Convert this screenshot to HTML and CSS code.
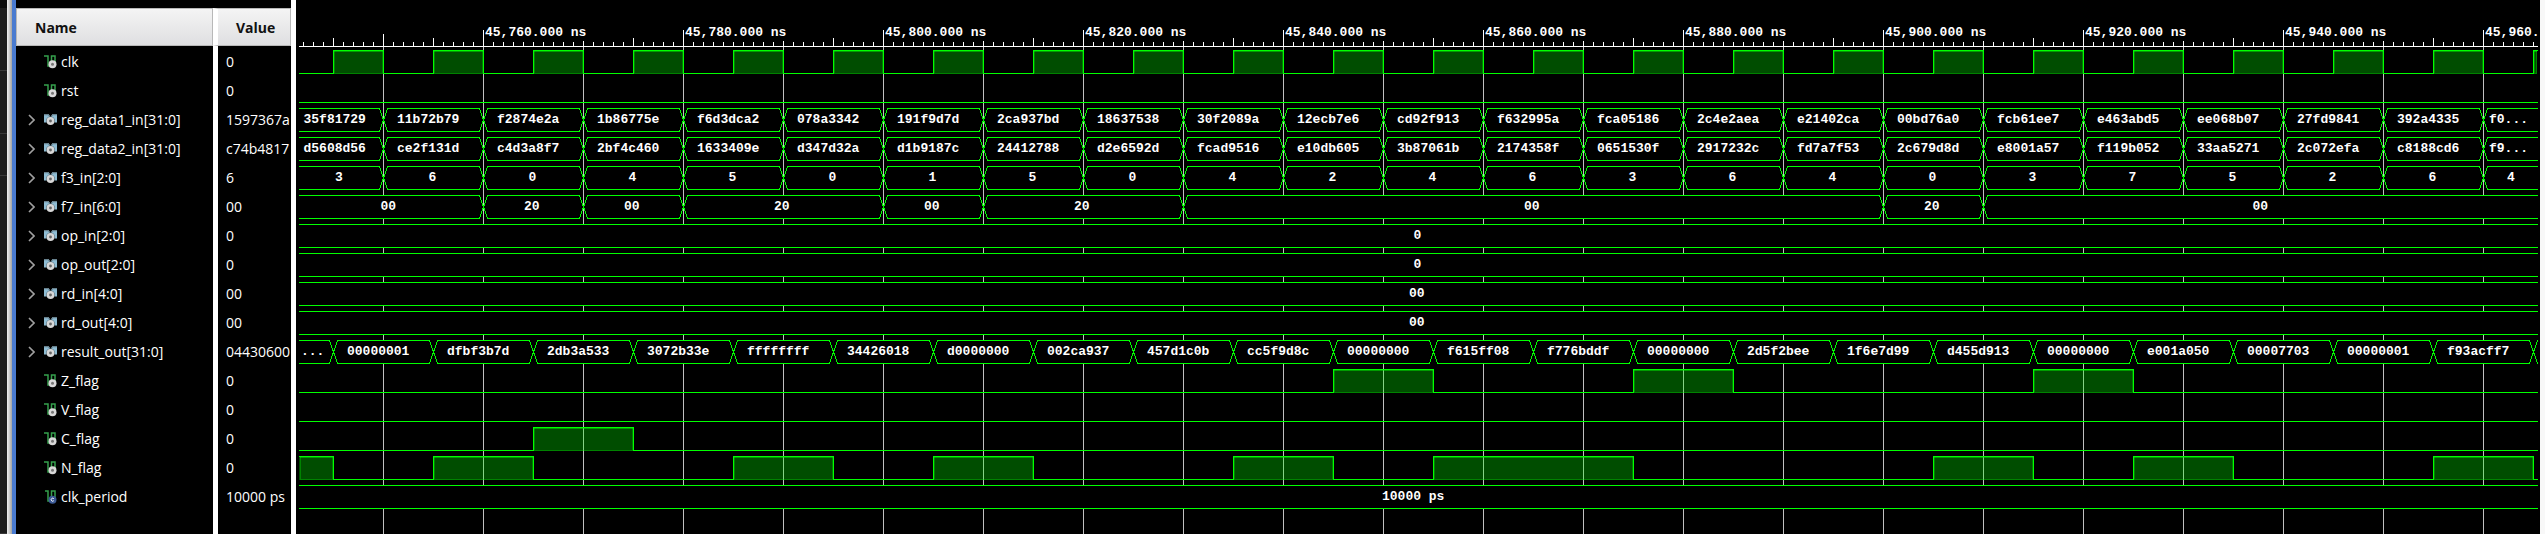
FILE: index.html
```
<!DOCTYPE html>
<html lang="en">
<head>
<meta charset="utf-8">
<title>Waveform viewer</title>
<link rel="stylesheet" href="styles.css">
</head>
<body>
<svg class="symbols" aria-hidden="true">
  <symbol id="scalar" viewBox="0 0 13 14">
    <path d="M0 1h4v10h3.500V1H11v7" fill="none" stroke="#35a04c" stroke-width="1.500"/>
    <circle cx="8.500" cy="9.300" r="4" fill="#d8d8d8"/>
    <circle cx="8.500" cy="9.300" r="1.500" fill="#777"/>
  </symbol>
  <symbol id="constant" viewBox="0 0 13 14">
    <path d="M1 1h3v10h3.500V1H11v7" fill="none" stroke="#35a04c" stroke-width="1.500"/>
    <circle cx="8.500" cy="9.700" r="4" fill="#3c5a96"/>
    <path d="M9.800 8.700a1.500 1.500 0 1 0 0 2" fill="none" stroke="#fff" stroke-width="1"/>
  </symbol>
  <symbol id="bus" viewBox="0 0 13 14">
    <path d="M0 1h4.500l2 3 2-3H13v8.500H0z" fill="#8fbdd4"/>
    <path d="M0 1h4.500l2 3 2-3H13v1.200H9L6.500 5 4 2.200H0z" fill="#67808c"/>
    <circle cx="6.500" cy="8" r="4.600" fill="#000" opacity=".4"/>
    <circle cx="6.500" cy="8" r="3.900" fill="#d8d8d8"/>
    <circle cx="6.500" cy="8" r="1.400" fill="#666"/>
  </symbol>
  <symbol id="chevron" viewBox="0 0 7 12">
    <path d="M1 1l5 5-5 5" fill="none" stroke="#a0a0a0" stroke-width="1.600"/>
  </symbol>
</svg>
<main class="viewer">
  <div class="dock"><span></span><span></span><span></span><span></span></div>
  <div class="splitter"></div>
  <div class="focus-edge"></div>
  <section class="signals">
    <table class="signal-table">
      <thead><tr><th class="name" scope="col">Name</th><th class="value" scope="col">Value</th></tr></thead>
      <tbody id="signals"></tbody>
    </table>
  </section>
  <section class="wave">
    <div class="ruler">
      <svg class="layer" id="ticks"></svg>
      <div class="times" id="times"></div>
    </div>
    <div class="plot" id="plot"></div>
  </section>
  <div class="edge"></div>
</main>
<script src="wave.js"></script>
</body>
</html>
```
FILE: styles.css
```
* { box-sizing: border-box; }

body {
  margin: 0;
  background: #000;
  color: #fff;
  font-family: "Open Sans", "Noto Sans", sans-serif;
  font-size: 14px;
}

.symbols { display: none; }

.viewer {
  display: flex;
  min-height: 100vh;
  overflow: hidden;
}

.dock {
  flex: none;
  width: 7px;
  padding-top: 8px;
  background: #0a0a0a;
  display: flex;
  flex-direction: column;
}
.dock span {
  height: 63px;
  background: #1c1c1c;
  border-bottom: 1px solid #383838;
}
.dock span:nth-child(3) { height: 42px; }
.dock span:last-child { flex: 1; }

.splitter {
  flex: none;
  width: 5px;
  background: linear-gradient(to right, #f0f0f0, #a4a4a4);
}
.focus-edge { flex: none; width: 4px; background: #4a7bd0; }

.signals {
  flex: none;
  display: flex;
  padding-top: 8px;
  border-right: 5px solid #fff;
}
.signal-table {
  border-collapse: separate;
  border-spacing: 0;
  table-layout: fixed;
  width: 275px;
  height: 100%;
}
.signal-table th {
  height: 38px;
  padding: 0 0 0 18px;
  border: 1px solid #b8b8b8;
  background: linear-gradient(#f4f4f4, #dfdfe1);
  color: #111;
  font-weight: bold;
  text-align: left;
}
.signal-table th.name { width: 197px; }
.signal-table th.value { border-left: 5px solid #fff; }
.signal-table td {
  height: 29px;
  padding: 2px 0 0;
  line-height: 20px;
  white-space: nowrap;
}
.signal-table td.value { padding-left: 8px; border-left: 5px solid #fff; }
.signal-table tr.rest td { height: auto; }

.signal {
  display: grid;
  grid-template-columns: 16px 13px 1fr;
  align-items: center;
  padding-left: 12px;
}
.signal .icon { width: 13px; height: 14px; }
.signal .label { padding-left: 4px; }
.expand {
  width: 7px;
  height: 12px;
  padding: 0;
  border: 0;
  background: none;
  display: flex;
}
.expand svg { width: 7px; height: 12px; }

.wave {
  flex: 1;
  min-width: 0;
  display: flex;
  flex-direction: column;
  overflow: hidden;
  font-family: "Liberation Mono", monospace;
  font-size: 13px;
  font-weight: bold;
}

.ruler, .track { display: grid; }
.ruler > *, .track > * { grid-area: 1 / 1; min-width: 0; }
.layer {
  display: block;
  width: 100%;
  height: 100%;
  clip-path: inset(0 2px 0 3px);
  shape-rendering: crispEdges;
}

.ruler { height: 47px; }
.times {
  display: flex;
  overflow: hidden;
  padding: 25px 0 0 187px;
  margin-right: 2px;
}
.times span {
  flex: none;
  width: 200px;
  padding-left: 2px;
  line-height: 16px;
}

.plot {
  flex: 1;
  background: linear-gradient(to right, #c0c0c0 1px, transparent 1px) 87px 0 / 100px 100%;
}
.track { height: 29px; }
.values { display: flex; position: relative; overflow: hidden; }
.values div {
  flex: none;
  display: flex;
  justify-content: center;
  align-items: center;
}
.values div:last-child { flex: 1; }

.tick { stroke: #fff; }
.line { fill: none; stroke: #00ff00; }
.box { fill: #000; stroke: #00ff00; }
.high { fill: #00ff00; fill-opacity: .3; }
.high-edge { fill: none; stroke: #00ff00; stroke-opacity: .3; }
.high-top { fill: none; stroke: #00ff00; stroke-opacity: .45; }

.edge { flex: none; width: 5px; background: #f8f8f8; }
```
FILE: wave.js
```
const STEP = 100;   // pixels per 10 ns
const HIGH = 3;     // line offsets inside a track
const LOW = 26;

const plot = document.getElementById('plot');
const width = plot.clientWidth;

// Evenly spaced values: the first one ends at `first`, the others take one step each.
function even(first, text) {
  return text.trim().split(/\s+/).map((value, i) => [value, i ? first + STEP * (i - 1) : 0]);
}

const clock = [];
for (let x = 37; x < width; x += STEP) clock.push([x, Math.min(x + 50, width - 3)]);

const signals = [
  { name: 'clk', value: '0', high: clock },
  { name: 'rst', value: '0', high: [] },
  { name: 'reg_data1_in[31:0]', value: '1597367a', bus: even(87, `35f81729 11b72b79 f2874e2a 1b86775e
      f6d3dca2 078a3342 191f9d7d 2ca937bd 18637538 30f2089a 12ecb7e6 cd92f913 f632995a fca05186
      2c4e2aea e21402ca 00bd76a0 fcb61ee7 e463abd5 ee068b07 27fd9841 392a4335 f0...`) },
  { name: 'reg_data2_in[31:0]', value: 'c74b4817', bus: even(87, `d5608d56 ce2f131d c4d3a8f7 2bf4c460
      1633409e d347d32a d1b9187c 24412788 d2e6592d fcad9516 e10db605 3b87061b 2174358f 0651530f
      2917232c fd7a7f53 2c679d8d e8001a57 f119b052 33aa5271 2c072efa c8188cd6 f9...`) },
  { name: 'f3_in[2:0]', value: '6', bus: even(87, '3 6 0 4 5 0 1 5 0 4 2 4 6 3 6 4 0 3 7 5 2 6 4') },
  { name: 'f7_in[6:0]', value: '00', bus: [['00', 0], ['20', 187], ['00', 287], ['20', 387], ['00', 587],
      ['20', 687], ['00', 887], ['20', 1587], ['00', 1687]] },
  { name: 'op_in[2:0]', value: '0', bus: [['0', 0]] },
  { name: 'op_out[2:0]', value: '0', bus: [['0', 0]] },
  { name: 'rd_in[4:0]', value: '00', bus: [['00', 0]] },
  { name: 'rd_out[4:0]', value: '00', bus: [['00', 0]] },
  { name: 'result_out[31:0]', value: '04430600', bus: even(37, `... 00000001 dfbf3b7d 2db3a533 3072b33e
      ffffffff 34426018 d0000000 002ca937 457d1c0b cc5f9d8c 00000000 f615ff08 f776bddf 00000000
      2d5f2bee 1f6e7d99 d455d913 00000000 e001a050 00007703 00000001 f93acff7`).concat([['', 2237]]) },
  { name: 'Z_flag', value: '0', high: [[1037, 1137], [1337, 1437], [1737, 1837]] },
  { name: 'V_flag', value: '0', high: [] },
  { name: 'C_flag', value: '0', high: [[237, 337]] },
  { name: 'N_flag', value: '0', high: [[3, 37], [137, 237], [437, 537], [637, 737], [937, 1037],
      [1137, 1337], [1637, 1737], [1837, 1937], [2137, 2237]] },
  { name: 'clk_period', value: '10000 ps', icon: 'constant', bus: [['10000 ps', 0]] },
];

function drawLevel(high) {
  let shapes = '';
  let line = `M0 ${LOW + .5}`;
  for (const [a, b] of high) {
    shapes += `<rect class="high" x="${a}" y="${HIGH}" width="${b - a}" height="${LOW - HIGH + 1}"/>`
      + `<path class="high-edge" d="M${a + 1.5} ${HIGH + 1}V${LOW + .5}H${b - .5}V${HIGH + 1}"/>`
      + `<path class="high-top" d="M${a + 1} ${HIGH + 1.5}H${b}"/>`;
    line += a > 3 ? `H${a + .5}V${HIGH + .5}` : `M${a} ${HIGH + .5}`;
    line += b < width - 3 ? `H${b + .5}V${LOW + .5}` : `H${b + .5}M${width} ${LOW + .5}`;
  }
  // The low line is only drawn between pulses.
  return shapes + `<path class="line" d="${line}H${width}"/>`;
}

function drawBus(bus) {
  const mid = (HIGH + LOW + 1) / 2;
  return bus.map(([, start], i) => {
    const a = i ? start + .5 : -9.5;
    const b = i + 1 < bus.length ? bus[i + 1][1] + .5 : width + 20;
    const top = HIGH + .5, low = LOW + .5;
    return `<path class="box" d="M${a} ${mid}L${a + 4} ${top}H${b - 4}L${b} ${mid}L${b - 4} ${low}H${a + 4}Z"/>`;
  }).join('');
}

function drawValues(bus) {
  return bus.map(([text, start], i) => {
    const next = bus[i + 1];
    const size = next ? ` style="width:${next[1] - start}px"` : '';
    return `<div${size}><span style="width:${text.length * 9}px">${text}</span></div>`;
  }).join('');
}

plot.innerHTML = signals.map(s => `<div class="track"><svg class="layer">${
  s.bus ? drawBus(s.bus) : drawLevel(s.high)}</svg>${
  s.bus ? `<div class="values">${drawValues(s.bus)}</div>` : ''}</div>`).join('');

document.getElementById('signals').innerHTML = signals.map(s => {
  const vector = s.bus && !s.icon;
  const icon = s.icon || (vector ? 'bus' : 'scalar');
  const expand = vector
    ? `<button class="expand" type="button" aria-label="Expand ${s.name}"><svg><use href="#chevron"/></svg></button>`
    : '<span></span>';
  return `<tr><td class="name"><div class="signal">${expand}<svg class="icon"><use href="#${icon}"/></svg>`
    + `<span class="label">${s.name}</span></div></td><td class="value">${s.value}</td></tr>`;
}).join('') + '<tr class="rest"><td></td><td class="value"></td></tr>';

// Ruler: a tick every 1 ns (10 px), taller ones every 5 ns, a label every 20 ns.
let ticks = `M0 46.5H${width}`;
for (let x = 7; x < width; x += 10) {
  const phase = (x + 13) % 200;
  const top = x === 87 ? 34 : { 0: 30, 100: 41, 150: 38, 50: x < 187 ? 38 : 42 }[phase] || 42;
  ticks += `M${x + .5} ${top}V47`;
}
document.getElementById('ticks').innerHTML = `<path class="tick" d="${ticks}"/>`;

let labels = '';
for (let x = 187, t = 45760; x < width; x += 200, t += 20) {
  labels += `<span>${t.toLocaleString('en-US')}.000 ns</span>`;
}
document.getElementById('times').innerHTML = labels;
```
